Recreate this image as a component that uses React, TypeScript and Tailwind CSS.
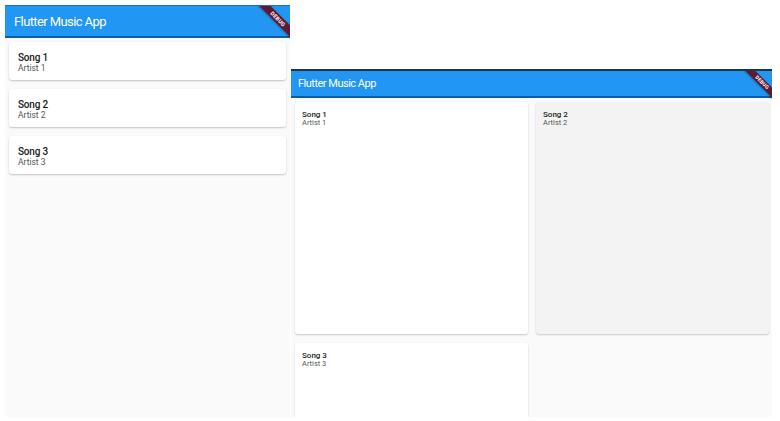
import React from "react";

function DebugBanner({ big }: { big: boolean }) {
  return (
    <div className="absolute top-0 right-0 w-[40px] h-[40px] overflow-hidden pointer-events-none">
      {big ? (
        <div className="absolute left-[2.5px] top-[9px] w-[50px] h-[8px] bg-[#5e1a30] rotate-45 flex items-center justify-center shadow-[0_1px_2px_rgba(0,0,0,0.3)]">
          <span className="text-white font-bold text-[5.5px] leading-[6px] tracking-[0.2px]">DEBUG</span>
        </div>
      ) : (
        <div className="absolute left-[7.5px] top-[7.5px] w-[44px] h-[7px] bg-[#5e1a30] rotate-45 flex items-center justify-center shadow-[0_1px_2px_rgba(0,0,0,0.3)]">
          <span className="text-white font-bold text-[5px] leading-[5px] tracking-[0.2px]">DEBUG</span>
        </div>
      )}
    </div>
  );
}

const songs = [
  { t: "Song 1", a: "Artist 1" },
  { t: "Song 2", a: "Artist 2" },
  { t: "Song 3", a: "Artist 3" },
];

export default function App() {
  return (
    <div
      className="w-[780px] h-[421px] bg-white flex items-start pl-[5px] pt-[5px] overflow-hidden"
      style={{ fontFamily: "Roboto, 'Noto Sans', sans-serif" }}
    >
      {/* Left frame: list */}
      <div className="w-[285px] h-[412px] bg-[#fafafa] flex flex-col relative shrink-0 overflow-hidden">
        <div className="h-[33px] shrink-0 bg-[#2196f3] border-t border-[#1a72c4] border-b-2 border-b-[#0f5aa5] flex items-center pl-[9px] relative">
          <span className="text-white text-[13px] tracking-[-0.6px] leading-none">Flutter Music App</span>
          <DebugBanner big />
        </div>
        <div className="flex flex-col gap-[9px] pt-[4px] px-[4px]">
          {songs.map((s) => (
            <div
              key={s.t}
              className="h-[38px] shrink-0 bg-white rounded-[3px] shadow-[0_1px_2px_rgba(0,0,0,0.22)] pl-[9px] pt-[10px] flex flex-col"
            >
              <span className="text-[10px] tracking-[-0.2px] leading-[11px] text-[#1a1a1a] font-medium">{s.t}</span>
              <span className="text-[8.5px] leading-[10px] text-[#555]">{s.a}</span>
            </div>
          ))}
        </div>
      </div>

      {/* Right frame: grid */}
      <div className="mt-[64px] ml-[1px] w-[481px] h-[348px] bg-[#fafafa] flex flex-col relative shrink-0 overflow-hidden">
        <div className="h-[29px] shrink-0 bg-[#2196f3] border-t-2 border-[#1d3550] border-b-2 border-b-[#0f5aa5] flex items-center pl-[7px] relative">
          <span className="text-white text-[11px] tracking-[-0.5px] leading-none">Flutter Music App</span>
          <DebugBanner big={false} />
        </div>
        <div className="grid grid-cols-2 gap-x-[8px] gap-y-[9px] pt-[4px] pl-[4px] pr-[3px] auto-rows-[232px]">
          {songs.map((s, i) => (
            <div
              key={s.t}
              className={`${i === 1 ? "bg-[#f3f3f3]" : "bg-white"} rounded-[3px] shadow-[0_1px_2px_rgba(0,0,0,0.2)] pl-[7px] pt-[8px] flex flex-col`}
            >
              <span className="text-[8px] leading-[9px] text-[#1a1a1a] font-medium">{s.t}</span>
              <span className="text-[7.5px] leading-[8px] text-[#555]">{s.a}</span>
            </div>
          ))}
        </div>
      </div>
    </div>
  );
}
